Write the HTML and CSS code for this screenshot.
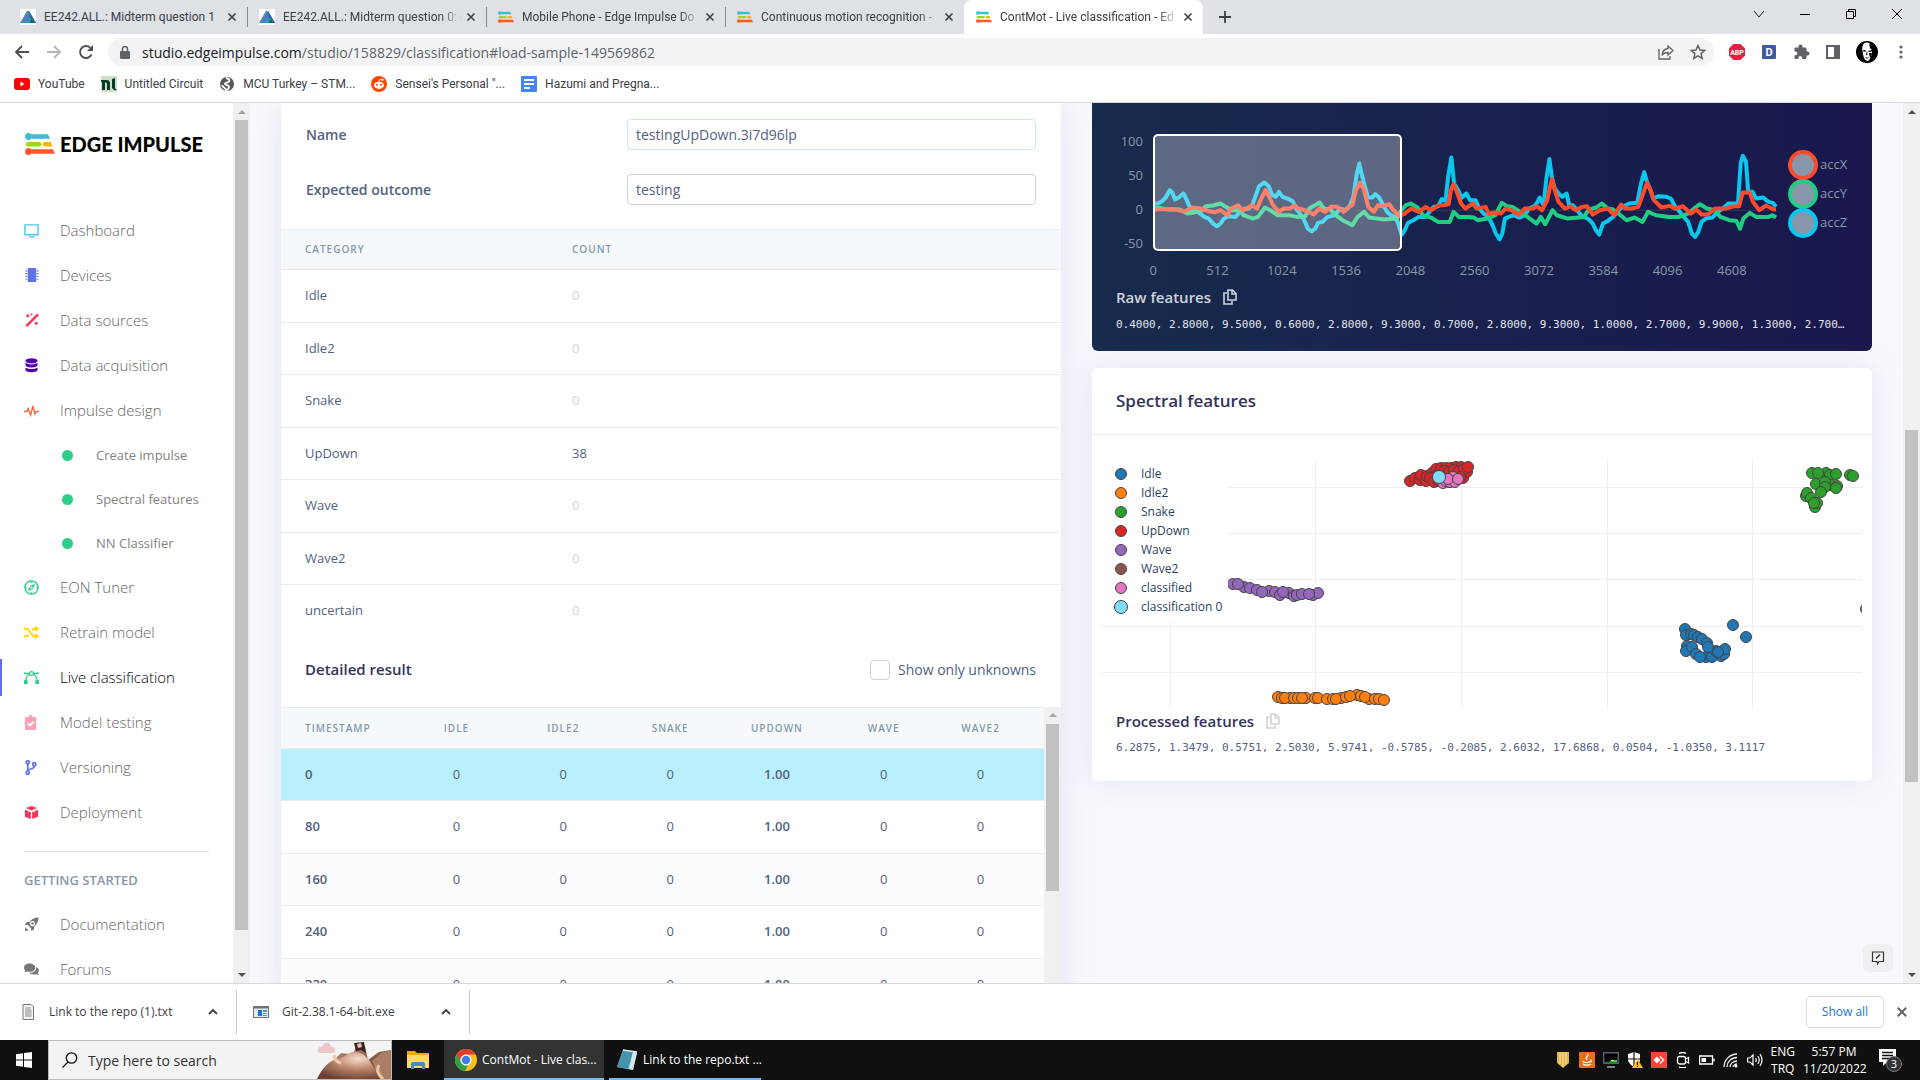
FILE: index.html
```html
<!DOCTYPE html>
<html lang="en">
<head>
<meta charset="utf-8">
<title>ContMot - Live classification - Edge Impulse</title>
<link rel="stylesheet" href="styles.css">
</head>
<body>
<svg class="defs" aria-hidden="true">
  <defs>
    <symbol id="ei" viewBox="0 0 30 22"><path fill="#3bbfd0" d="M3.500 0c1.200 0 1.800.600 2.500 1.300h17l2 4.400H6c-.700.800-1.300 1.300-2.500 1.300a3.500 3.500 0 0 1 0-7z"/><rect x="1" y="9" width="15.500" height="4.400" rx="2.200" fill="#a6d40d"/><path fill="#ffb400" d="M20 9h5.500l2 4.400H20a2.200 2.200 0 0 1 0-4.400z"/><path fill="#ff562e" d="M3.500 15c1.200 0 1.800.600 2.500 1.300h22l2 4.400H6c-.700.800-1.300 1.300-2.500 1.300a3.500 3.500 0 0 1 0-7z"/></symbol>
    <symbol id="moodle" viewBox="0 0 16 16"><path fill="#fff" d="M0 0h16v16H0z"/><path fill="#4a86bd" d="M7 2h2l7 12H0z"/><path fill="#2f6595" d="M9 2l7 12h-6z"/><path fill="#1a9ad0" d="M10 8l4 6H7z"/><path fill="#0b6e3b" d="M11 10l3 4h-4z"/></symbol>
    <symbol id="x" viewBox="0 0 10 10"><path d="M1.500 1.500l7 7M8.500 1.500l-7 7" stroke="currentColor" stroke-width="1.600" fill="none"/></symbol>
    <symbol id="up" viewBox="0 0 10 10"><path d="M1 7l4-4 4 4" stroke="currentColor" stroke-width="1.800" fill="none"/></symbol>
    <symbol id="copy" viewBox="0 0 14 16"><g fill="none" stroke="currentColor" stroke-width="1.600"><path d="M5 1h4.500L13 4.500V11H5z"/><path d="M9 1v4h4M4 4H1v11h8v-3"/></g></symbol>
  </defs>
</svg>

<header class="browser">
  <div class="tabstrip">
    <div class="tab"><svg class="fav"><use href="#moodle"/></svg><span class="tab-title">EE242.ALL.: Midterm question 1</span><button class="tab-close" aria-label="Close tab"><svg><use href="#x"/></svg></button></div>
    <div class="tab ruled"><svg class="fav"><use href="#moodle"/></svg><span class="tab-title">EE242.ALL.: Midterm question 0: (</span><button class="tab-close" aria-label="Close tab"><svg><use href="#x"/></svg></button></div>
    <div class="tab ruled"><svg class="fav"><use href="#ei"/></svg><span class="tab-title">Mobile Phone - Edge Impulse Do</span><button class="tab-close" aria-label="Close tab"><svg><use href="#x"/></svg></button></div>
    <div class="tab ruled"><svg class="fav"><use href="#ei"/></svg><span class="tab-title">Continuous motion recognition -</span><button class="tab-close" aria-label="Close tab"><svg><use href="#x"/></svg></button></div>
    <div class="tab active"><svg class="fav"><use href="#ei"/></svg><span class="tab-title">ContMot - Live classification - Ed</span><button class="tab-close" aria-label="Close tab"><svg><use href="#x"/></svg></button></div>
    <button class="new-tab" aria-label="New tab"><svg viewBox="0 0 12 12"><path d="M6 0v12M0 6h12" stroke="#3c4043" stroke-width="1.800"/></svg></button>
    <div class="window-buttons">
      <button aria-label="Search tabs"><svg viewBox="0 0 10 10"><path d="M0 2l5 6 5-6" fill="none" stroke="#222"/></svg></button>
      <button aria-label="Minimize"><svg viewBox="0 0 10 10"><path d="M0 5.500h10" stroke="#000"/></svg></button>
      <button aria-label="Restore"><svg viewBox="0 0 10 10"><path d="M.5 2.500h7v7h-7zM2.500 2.500v-2h7v7h-2" fill="none" stroke="#000"/></svg></button>
      <button aria-label="Close"><svg viewBox="0 0 10 10"><path d="M0 0l10 10M10 0L0 10" stroke="#000"/></svg></button>
    </div>
  </div>
  <div class="toolbar">
    <div class="nav-buttons">
      <button aria-label="Back"><svg viewBox="0 0 16 16"><path d="M15 8H2M8 2L2 8l6 6" fill="none" stroke="#4b4e52" stroke-width="1.800"/></svg></button>
      <button aria-label="Forward"><svg viewBox="0 0 16 16"><path d="M1 8h13M8 2l6 6-6 6" fill="none" stroke="#b4b6b9" stroke-width="1.800"/></svg></button>
      <button aria-label="Reload"><svg viewBox="0 0 16 16"><path d="M13.500 10.500a6 6 0 1 1-1.200-6.700" fill="none" stroke="#4b4e52" stroke-width="1.900"/><path d="M15 1v6H9z" fill="#4b4e52"/></svg></button>
    </div>
    <div class="address">
      <svg class="lock" viewBox="0 0 10 13"><rect y="5" width="10" height="8" rx="1" fill="#5f6368"/><path d="M2.500 5V3a2.500 2.500 0 0 1 5 0v2" fill="none" stroke="#5f6368" stroke-width="1.500"/></svg>
      <span class="url"><b>studio.edgeimpulse.com</b>/studio/158829/classification#load-sample-149569862</span>
      <svg class="share" viewBox="0 0 16 16"><path d="M1 5v10h11v-3" fill="none" stroke="#5f6368" stroke-width="1.300"/><path d="M10 2l5 4.500-5 4.500V8.500C7 8.500 5 9.500 4 11.500 4.200 8 6 5 10 4.500z" fill="none" stroke="#5f6368" stroke-width="1.300"/></svg>
      <svg class="star" viewBox="0 0 16 16"><path d="M8 1.500l2 4.500 4.800.4-3.700 3.200 1.100 4.800L8 11.900l-4.200 2.500 1.100-4.800L1.200 6.400 6 6z" fill="none" stroke="#5f6368" stroke-width="1.500"/></svg>
    </div>
    <div class="extensions">
      <svg viewBox="0 0 18 18"><path d="M5.500 1h7L17 5.500v7L12.500 17h-7L1 12.500v-7z" fill="#ee1c3f"/><text x="9" y="12" class="abp">ABP</text></svg>
      <svg viewBox="0 0 18 18"><rect x="2" y="2" width="14" height="14" rx="1" fill="#3d5a9e"/><text x="9" y="13" class="dletter">D</text></svg>
      <svg viewBox="0 0 18 18"><path d="M15.500 8.500h-1V5.800c0-.700-.600-1.300-1.300-1.300h-2.700v-1a2 2 0 0 0-4 0v1H3.800c-.700 0-1.300.600-1.300 1.300v2.600h1a1.900 1.900 0 0 1 0 3.800h-1v2.500c0 .700.600 1.300 1.300 1.300h2.500v-1a1.900 1.900 0 0 1 3.800 0v1h3.100c.700 0 1.300-.600 1.300-1.300v-2.200h1a2 2 0 0 0 0-4z" fill="#5f6368"/></svg>
      <svg viewBox="0 0 18 18"><path d="M2 2h14v14H2zM4 4v10h6V4z" fill="#5f6368" fill-rule="evenodd"/></svg>
      <svg class="avatar" viewBox="0 0 22 22"><circle cx="11" cy="11" r="11" fill="#000"/><path d="M7 4c1-3 5-3 7-1 2 2 2 5 2 8 0 3-2 8-4 9-3 0-5-4-5-8-1-3-1-6 0-8z" fill="#fff"/><path d="M7 9l3 .5-.5 1.200-2-.2zM12 10l4-1v1.500l-3 .5zM11 9.500l.5 4.500-1.500.2zM9 16.500h4l-2 1.200zM13 12h3l-1.500 6-1-3zM13 3c3 1 4 3 3 6l-2-2z" fill="#000"/></svg>
      <svg viewBox="0 0 18 18"><g fill="#5f6368"><circle cx="9" cy="4" r="1.600"/><circle cx="9" cy="9" r="1.600"/><circle cx="9" cy="14" r="1.600"/></g></svg>
    </div>
  </div>
  <nav class="bookmarks" aria-label="Bookmarks">
    <a href="#"><svg viewBox="0 0 16 16"><rect y="2" width="16" height="12" rx="3" fill="#f00"/><path d="M6.500 5.500l4 2.500-4 2.500z" fill="#fff"/></svg>YouTube</a>
    <a href="#"><svg viewBox="0 0 16 16"><path fill="#cfdecb" d="M0 0h16v16H0z"/><path fill="#0a3b25" d="M0 4h5c3 0 4 1 4 4v6H6V8c0-1-.5-1.500-2-1.500V14H1V6H0zM11 3l3-1v9c0 2 1 2 2 3-3 1-5-1-5-3z"/></svg>Untitled Circuit</a>
    <a href="#"><svg viewBox="0 0 16 16"><circle cx="8" cy="8" r="7" fill="#55595e"/><path d="M7 2c3 .5 4 2 3 3.500S5.500 6.500 6 8s4 1 4 3-2 3-3 3c0-2-3-2-4-5" fill="none" stroke="#fff" stroke-width="1.800"/></svg>MCU Turkey – STM...</a>
    <a href="#"><svg viewBox="0 0 16 16"><circle cx="8" cy="8" r="8" fill="#ff4500"/><ellipse cx="8" cy="9.300" rx="5" ry="3.600" fill="#fff"/><circle cx="11.500" cy="3.800" r="1.100" fill="#fff"/><path d="M8 6l.8-2.700 2.500.5M5.800 10.800c1.200 1 3.200 1 4.400 0" fill="none" stroke="#fff" stroke-width=".8"/><g fill="#ff4500"><circle cx="6" cy="8.700" r="1"/><circle cx="10" cy="8.700" r="1"/></g></svg>Sensei's Personal "...</a>
    <a href="#"><svg viewBox="0 0 16 16"><rect width="16" height="16" rx="1" fill="#4285f4"/><path d="M3 4h10M3 8h10M3 12h6" stroke="#fff" stroke-width="1.800"/></svg>Hazumi and Pregna...</a>
  </nav>
</header>

<div class="page">
  <aside class="sidebar">
    <a class="logo" href="#"><svg><use href="#ei"/></svg>EDGE IMPULSE</a>
    <nav aria-label="Project">
      <a href="#"><svg viewBox="0 0 16 16"><path d="M1 2h14v10.500H1zM5 14.800h6.500" fill="none" stroke="#4cc5f2" stroke-width="1.500"/></svg>Dashboard</a>
      <a href="#"><svg viewBox="0 0 16 16"><rect x="4" width="9" height="15" rx="1" fill="#5e72e4"/><path d="M1.500 3h14M1.500 6h14M1.500 9h14M1.500 12h14" stroke="#5e72e4" stroke-width="1.200" stroke-dasharray="2 10 2"/></svg>Devices</a>
      <a href="#"><svg viewBox="0 0 16 16"><path d="M2.500 14L15 1.500" stroke="#f5365c" stroke-width="2.800"/><path d="M4 1v4M2 3h4M8 .5v2M7 1.500h2M13 9v4M11 11h4" stroke="#f5365c" stroke-width="1.300"/></svg>Data sources</a>
      <a href="#"><svg viewBox="0 0 16 16"><g fill="#5603ad"><ellipse cx="8" cy="3" rx="6.500" ry="2.800"/><path d="M1.500 5.300q6.500 3 13 0v2q0 2.800-6.500 2.800T1.500 7.300zM1.500 10.300q6.500 3 13 0v2q0 2.800-6.500 2.800T1.500 12.300z"/></g></svg>Data acquisition</a>
      <a href="#"><svg viewBox="0 0 16 16"><path d="M0 9h3l1.500-3L7 13l2.500-10 2 8.500L13 9h3" fill="none" stroke="#fb6340" stroke-width="1.500"/></svg>Impulse design</a>
      <a class="sub" href="#"><i></i>Create impulse</a>
      <a class="sub" href="#"><i></i>Spectral features</a>
      <a class="sub" href="#"><i></i>NN Classifier</a>
      <a href="#"><svg viewBox="0 0 16 16"><circle cx="8" cy="8" r="7" fill="none" stroke="#2dce89" stroke-width="1.500"/><path d="M12 4L9.500 9.500 4 12l2.500-5.500z" fill="#2dce89"/><circle cx="8" cy="8" r="1.200" fill="#fff"/><path d="M8 1v2M8 13v2M1 8h2M13 8h2" stroke="#2dce89"/></svg>EON Tuner</a>
      <a href="#"><svg viewBox="0 0 16 16"><path d="M0 4h3.500l6.500 8h3M0 12h3.500L5 10.200M8.500 5.800L10 4h3" fill="none" stroke="#ffd600" stroke-width="2"/><path d="M12 .5L16 4l-4 3.500zM12 8.500l4 3.500-4 3.500z" fill="#ffd600"/></svg>Retrain model</a>
      <a class="current" href="#"><svg viewBox="0 0 16 16"><g fill="none" stroke="#2dce89" stroke-width="1.300"><path d="M2 12c0-5 2-7.500 6-7.500s6 2.500 6 7.500M2 3.500h12"/><circle cx="8" cy="3.700" r="2" fill="#fff"/></g><path d="M0 11h4v4H0zM12 11h4v4h-4z" fill="#2dce89"/><circle cx="1.200" cy="3.500" r="1.200" fill="#2dce89"/><circle cx="14.800" cy="3.500" r="1.200" fill="#2dce89"/></svg>Live classification</a>
      <a href="#"><svg viewBox="0 0 16 16"><path d="M2 2h3a2 2 0 0 1 4 0h3q1 0 1 1v12q0 1-1 1H2q-1 0-1-1V3q0-1 1-1z" fill="#f7a2b4"/><path d="M4 9l2.300 2.300L10.500 7" fill="none" stroke="#fff" stroke-width="1.800"/></svg>Model testing</a>
      <a href="#"><svg viewBox="0 0 16 16"><g fill="none" stroke="#5e72e4" stroke-width="1.800"><circle cx="4" cy="2.500" r="1.700"/><circle cx="4" cy="13.500" r="1.700"/><circle cx="11" cy="4.500" r="1.700"/><path d="M4 4v8M11 6c0 4-4 3-7 5"/></g></svg>Versioning</a>
      <a href="#"><svg viewBox="0 0 16 16"><path d="M8 1l6 2.300L8 5.800 2 3.300zM1 5l6.300 2.500V15L1 12.500zM15 5L8.700 7.500V15l6.300-2.500z" fill="#f5365c"/><path d="M5 5v3M11 5v3" stroke="#fff" stroke-width=".8"/></svg>Deployment</a>
    </nav>
    <hr>
    <h6>GETTING STARTED</h6>
    <nav aria-label="Getting started">
      <a href="#"><svg viewBox="0 0 16 16"><path d="M15.500.5C11 .5 8 2.500 6 5L2.500 5.500 1 8.500h3l3.500 3.500v3l3-1.500.5-3.500c2.500-2 4.500-5 4.500-9.500z" fill="#777"/><circle cx="9" cy="7" r="2.800" fill="#fff"/><circle cx="9" cy="7" r="1.300" fill="#777"/><path d="M1 15l.5-4 3.500 3.500z" fill="#777"/></svg>Documentation</a>
      <a href="#"><svg viewBox="0 0 16 16"><path d="M6 1.500c3.500 0 6 2 6 4.500s-2.500 4.500-6 4.500c-1 0-1.700-.1-2.500-.4L.5 11l1-2.300C.5 8 0 7 0 6c0-2.500 2.500-4.500 6-4.500z" fill="#777"/><path d="M13 5.500c2 .7 3 2 3 3.500 0 1-.5 2-1.300 2.700l1 2.300-3-1c-3 .7-6 0-7-1.500 4 .2 7.500-2 7.300-6z" fill="#777"/></svg>Forums</a>
    </nav>
  </aside>
  <div class="scrollbar side-scroll"><span class="arrow up off"></span><span class="thumb"></span><span class="arrow down"></span></div>

  <main class="content">
    <section class="card results">
      <form class="fields">
        <label for="name">Name</label><input id="name" class="focused" type="text" value="testingUpDown.3i7d96lp">
        <label for="outcome">Expected outcome</label><input id="outcome" type="text" value="testing">
      </form>
      <table class="summary">
        <thead><tr><th>CATEGORY</th><th>COUNT</th></tr></thead>
        <tbody>
          <tr><td>Idle</td><td class="zero">0</td></tr>
          <tr><td>Idle2</td><td class="zero">0</td></tr>
          <tr><td>Snake</td><td class="zero">0</td></tr>
          <tr><td>UpDown</td><td>38</td></tr>
          <tr><td>Wave</td><td class="zero">0</td></tr>
          <tr><td>Wave2</td><td class="zero">0</td></tr>
          <tr><td>uncertain</td><td class="zero">0</td></tr>
        </tbody>
      </table>
      <div class="detail-head">
        <h4>Detailed result</h4>
        <label class="check"><input type="checkbox">Show only unknowns</label>
      </div>
      <div class="detail-body">
        <table class="detail">
          <thead><tr><th>TIMESTAMP</th><th>IDLE</th><th>IDLE2</th><th>SNAKE</th><th>UPDOWN</th><th>WAVE</th><th>WAVE2</th></tr></thead>
          <tbody>
            <tr class="selected"><td>0</td><td>0</td><td>0</td><td>0</td><td>1.00</td><td>0</td><td>0</td></tr>
            <tr><td>80</td><td>0</td><td>0</td><td>0</td><td>1.00</td><td>0</td><td>0</td></tr>
            <tr><td>160</td><td>0</td><td>0</td><td>0</td><td>1.00</td><td>0</td><td>0</td></tr>
            <tr><td>240</td><td>0</td><td>0</td><td>0</td><td>1.00</td><td>0</td><td>0</td></tr>
            <tr><td>320</td><td>0</td><td>0</td><td>0</td><td>1.00</td><td>0</td><td>0</td></tr>
          </tbody>
        </table>
        <div class="scrollbar table-scroll"><span class="arrow up off"></span><span class="thumb"></span></div>
      </div>
    </section>

    <div class="column">
      <section class="raw">
        <div class="chart">
          <ul class="y-axis"><li>100</li><li>50</li><li>0</li><li>-50</li></ul>
          <div class="plot">
            <svg viewBox="136 102 1163 350" preserveAspectRatio="none">
              <path class="zero-line" d="M136 330H1299"/>
              <polyline class="acc-z" points="136,310 145,310 153,303 160,292 167,270 172,277 177,298 184,292 193,280 199,300 206,325 214,330 222,338 232,350 240,355 248,370 255,378 262,370 268,356 276,348 290,350 298,335 307,325 315,325 322,312 328,285 334,258 344,247 352,258 358,283 365,290 371,275 378,290 388,296 397,303 403,325 410,340 417,355 425,385 432,393 439,385 444,368 452,365 462,350 475,345 485,325 495,330 503,318 510,290 516,225 521,190 526,225 532,262 537,292 545,292 551,282 558,292 566,315 573,335 580,345 588,350 594,370 600,404 606,390 612,368 622,360 632,350 645,350 652,335 660,320 668,318 675,297 682,302 687,230 693,172 698,250 705,268 712,293 721,280 728,300 738,300 745,325 753,340 762,350 770,375 776,400 783,417 788,400 793,355 800,350 810,345 820,352 830,345 838,325 848,318 853,308 858,292 865,315 870,240 876,177 881,235 886,265 893,280 900,290 908,280 913,315 920,315 928,330 935,345 943,352 950,358 957,370 963,390 969,403 976,370 985,362 995,350 1005,330 1014,318 1025,310 1040,308 1047,250 1053,216 1058,245 1065,272 1070,295 1080,288 1095,290 1103,295 1110,318 1118,332 1128,352 1135,365 1142,400 1148,410 1154,395 1160,365 1168,355 1180,352 1190,335 1200,325 1210,310 1228,310 1233,190 1237,167 1243,185 1247,275 1255,275 1262,295 1275,292 1285,305 1293,308 1299,320"/>
              <polyline class="acc-y" points="136,322 150,324 165,328 185,328 200,340 215,336 228,330 235,318 248,316 262,310 272,320 284,330 298,330 305,345 322,355 332,350 345,322 355,330 368,345 390,345 405,350 420,348 428,325 447,307 455,325 467,328 477,345 490,360 508,375 518,350 530,335 540,352 568,358 590,355 600,330 608,315 617,310 630,322 640,345 655,352 668,365 690,365 697,335 707,350 725,350 735,352 742,360 760,355 775,345 787,308 797,318 807,320 822,335 835,350 852,370 860,350 868,372 882,330 890,345 910,355 940,350 950,328 963,322 974,310 985,325 995,328 1005,340 1020,360 1035,352 1050,365 1060,335 1075,345 1100,350 1118,350 1135,340 1150,320 1157,312 1170,325 1185,330 1195,350 1212,360 1225,362 1232,385 1238,355 1250,338 1262,350 1285,350 1292,345 1299,352"/>
              <polyline class="acc-x" points="136,328 160,326 175,327 195,333 210,322 225,325 240,333 252,336 262,330 275,345 282,325 295,315 302,330 312,325 320,315 330,325 337,300 346,270 353,290 360,315 371,335 380,325 392,325 400,315 407,325 420,330 436,343 446,325 458,335 468,320 480,320 492,335 500,322 508,315 515,270 522,248 529,265 538,320 548,335 556,315 565,318 577,312 585,330 596,347 606,340 618,325 632,335 645,320 655,330 668,316 678,315 688,312 692,270 697,252 703,275 711,310 719,325 733,310 740,325 757,320 762,340 773,337 785,340 795,325 805,330 819,344 830,325 845,325 853,318 862,330 872,300 877,260 881,237 886,270 893,305 905,325 915,318 925,330 937,320 946,318 957,343 970,330 985,325 997,345 1010,313 1018,325 1030,325 1042,320 1050,285 1058,248 1065,270 1071,300 1085,322 1101,317 1110,325 1125,318 1140,340 1150,328 1160,343 1172,343 1185,325 1205,325 1220,318 1230,318 1237,277 1250,277 1256,305 1268,330 1280,316 1295,328 1299,328"/>
            </svg>
            <div class="selection"></div>
          </div>
          <ul class="series"><li class="sx">accX</li><li class="sy">accY</li><li class="sz">accZ</li></ul>
          <ul class="x-axis"><li>0</li><li>512</li><li>1024</li><li>1536</li><li>2048</li><li>2560</li><li>3072</li><li>3584</li><li>4096</li><li>4608</li></ul>
        </div>
        <h5>Raw features <button aria-label="Copy raw features"><svg><use href="#copy"/></svg></button></h5>
        <code>0.4000, 2.8000, 9.5000, 0.6000, 2.8000, 9.3000, 0.7000, 2.8000, 9.3000, 1.0000, 2.7000, 9.9000, 1.3000, 2.700…</code>
      </section>

      <section class="card features">
        <h4>Spectral features</h4>
        <div class="scatter">
          <svg id="scatter" viewBox="0 0 761 250">
            <path class="grid" d="M69.500 0v250M214.500 0v250M360.500 0v250M506.500 0v250M651.500 0v250M0 28.500h761M0 74.500h761M0 120.500h761M0 167.500h761M0 213.500h761"/>
          </svg>
          <ul class="legend">
            <li><i style="background:#1f77b4"></i>Idle</li>
            <li><i style="background:#ff7f0e"></i>Idle2</li>
            <li><i style="background:#2ca02c"></i>Snake</li>
            <li><i style="background:#d62728"></i>UpDown</li>
            <li><i style="background:#9467bd"></i>Wave</li>
            <li><i style="background:#8c564b"></i>Wave2</li>
            <li><i style="background:#e377c2"></i>classified</li>
            <li><i class="big" style="background:#7fdbff"></i>classification 0</li>
          </ul>
        </div>
        <div class="processed">
          <h5>Processed features <button aria-label="Copy processed features"><svg><use href="#copy"/></svg></button></h5>
          <code>6.2875, 1.3479, 0.5751, 2.5030, 5.9741, -0.5785, -0.2085, 2.6032, 17.6868, 0.0504, -1.0350, 3.1117</code>
        </div>
      </section>
    </div>
    <button class="feedback" aria-label="Feedback"><svg viewBox="0 0 14 14"><path d="M1.500 1h11v9.500H8L6.500 13 6 10.500H1.500z" fill="none" stroke="#333" stroke-width="1.200"/><path d="M5 7.500l4-4" stroke="#333" stroke-width="1.500"/></svg></button>
  </main>
  <div class="scrollbar page-scroll"><span class="arrow up"></span><span class="thumb"></span><span class="arrow down"></span></div>
</div>

<section class="downloads" aria-label="Downloads">
  <div class="download"><svg class="file" viewBox="0 0 16 16"><path d="M3 .5h8l2.500 2.500v12.500H3z" fill="#f4f4f4" stroke="#777"/><path d="M5 4h6M5 6h6.500M5 8h6.500M5 10h6.500M5 12h6.500" stroke="#888"/></svg><span>Link to the repo (1).txt</span><button aria-label="More"><svg><use href="#up"/></svg></button></div>
  <div class="download second"><svg class="file" viewBox="0 0 16 16"><path d="M.5 2.500h15v11H.5z" fill="#e8eaed" stroke="#6d7278"/><path d="M.5 2.500h15v2H.5z" fill="#6d7278"/><path d="M5 6h4v6H5z" fill="#1078d8"/><path d="M10 6h4v2h-4zM10 9h4v1h-4zM10 11h4v1h-4z" fill="#4d93d0"/></svg><span>Git-2.38.1-64-bit.exe</span><button aria-label="More"><svg><use href="#up"/></svg></button></div>
  <div class="download-actions"><button class="show-all">Show all</button><button class="dismiss" aria-label="Close downloads"><svg><use href="#x"/></svg></button></div>
</section>

<footer class="taskbar">
  <button class="start" aria-label="Start"><svg viewBox="0 0 16 16"><path d="M0 2.200l7-1v6.300H0zM8 1l8-1v7.500H8zM0 8.500h7v6.300l-7-1zM8 8.500h8V16l-8-1z" fill="#fff"/></svg></button>
  <label class="search">
    <svg class="lens" viewBox="0 0 16 16"><circle cx="9.500" cy="6" r="5.200" fill="none" stroke="#111" stroke-width="1.300"/><path d="M6 10L.5 15.500" stroke="#111" stroke-width="1.300"/></svg>
    <input type="text" placeholder="Type here to search" aria-label="Search">
    <svg class="art" viewBox="0 0 74 38">
      <defs>
        <linearGradient id="m1" x1="0" x2="1" y1="0" y2="1"><stop offset="0" stop-color="#c79a7c"/><stop offset=".5" stop-color="#8a5c48"/><stop offset="1" stop-color="#4b2a25"/></linearGradient>
        <radialGradient id="m2" cx=".65" cy=".25" r=".8"><stop offset="0" stop-color="#f6dccb"/><stop offset=".5" stop-color="#b98468"/><stop offset="1" stop-color="#6a4036"/></radialGradient>
      </defs>
      <path d="M3 12c-4-2-2-7 2-6 2-6 9-5 9 0 5-1 6 6 1 6z" fill="#eec6ca"/>
      <path d="M17 19l7-7 8 1 5-2 2-6h9l3 14 4-3 7-5 12-2v29H10z" fill="url(#m1)"/>
      <path d="M37 2l10-1 2 11-5-3-5 1z" fill="#3a2222"/><path d="M40 3l4-1 1 4-4 1z" fill="#e6c2a8"/>
      <path d="M55 20l9-8 10-3v29H62z" fill="#ad7d63"/>
      <path d="M0 38c6-12 12-18 20-20 8-1 12-8 18-7 9 0 14 7 18 14l8 13z" fill="url(#m2)"/>
      <path d="M17 14q1 7 7 8M62 24q-4 7 4 14" fill="none" stroke="#edc9a4" stroke-width="3"/>
    </svg>
  </label>
  <button class="explorer" aria-label="File Explorer"><svg viewBox="0 0 22 20"><path d="M0 1h8l2 2h12v15H0z" fill="#f3a712"/><path d="M0 5h22v13H0z" fill="#ffd968"/><path d="M4 19v-5q0-2 2-2h10q2 0 2 2v5h-3v-3H7v3z" fill="#3f8fd0"/></svg></button>
  <button class="task focus"><svg viewBox="0 0 22 22"><circle cx="11" cy="11" r="11" fill="#fbc116"/><path d="M1.500 5.500A11 11 0 0 1 20.500 5.500H11a5.500 5.500 0 0 0-5 8z" fill="#e33b2e"/><path d="M1.500 5.500L6.200 13.700A5.500 5.500 0 0 0 13 16l-3 6A11 11 0 0 1 1.500 5.500z" fill="#2ba24c"/><circle cx="11" cy="11" r="5.500" fill="#fff"/><circle cx="11" cy="11" r="4.200" fill="#3b7ded"/></svg>ContMot - Live clas...</button>
  <button class="task"><svg viewBox="0 0 22 22"><path d="M7 1l14 2-4 18L1 18z" fill="#7fc4d8"/><path d="M7 1l10 1.500L12 20 1 18z" fill="#4795ad"/><path d="M17 3l4 1-4 17-4-1z" fill="#d7e6ea"/><path d="M7 1l14 2" stroke="#e6e6e6" stroke-width="1.500"/></svg>Link to the repo.txt ...</button>
  <div class="tray">
    <svg viewBox="0 0 16 16"><path d="M2 0h12v11l-6 5-6-5z" fill="#e0b44e"/><path d="M5 0v12M8 0v15M11 0v12" stroke="#fbe6a0"/></svg>
    <svg viewBox="0 0 16 16"><rect width="16" height="16" rx="1" fill="#e76f17"/><path d="M8 2c3 2-3 3 0 6M4 9c0 2 7 2 7 0M4 12c2 2 7 1 8 0M11 8c2 0 2 2 0 2" fill="none" stroke="#fff" stroke-width="1.200"/></svg>
    <svg viewBox="0 0 16 16"><path d="M0 0h16v12H0z" fill="#55606b"/><path d="M1.500 1.500h13v9h-13z" fill="#000"/><path d="M2 10h5v-1h3V8h4v2.500H2z" fill="#2fd32f"/><path d="M8 8h3v1H8z" fill="#e8e32b"/><path d="M4 14h8v2H4z" fill="#78828c"/></svg>
    <svg viewBox="0 0 16 16"><path d="M7 0l6 2v5c0 4-3 6-6 8-3-2-6-4-6-8V2z" fill="#fff"/><path d="M7 0v15M1 7h12" stroke="#101010" stroke-width="1.200"/><path d="M10.500 7L16 16H5z" fill="#ffc20e"/><path d="M10.500 10v3M10.500 14v1" stroke="#111" stroke-width="1.200"/></svg>
    <svg viewBox="0 0 16 16"><path d="M0 0h16v16H0z" fill="#fb4238"/><path d="M6 4.500L9.500 8 6 11.500 2.500 8z" fill="#fff"/><path d="M9 4.500L12.500 8 9 11.500" fill="none" stroke="#fff" stroke-width="1.500"/></svg>
    <svg viewBox="0 0 16 16"><g fill="none" stroke="#fff" stroke-width="1.300"><rect x="2.500" y="4.500" width="8" height="7.500" rx="2"/><path d="M10.500 7l3-1.500v5.500l-3-1.500M4 1.500q3.500-2 7 0M4 15q3.500 1.500 7 0"/></g></svg>
    <svg viewBox="0 0 16 16"><path d="M.5 4h13v8H.5zM15 6.500v3" fill="none" stroke="#fff" stroke-width="1.300"/><path d="M2.500 6H7v4H2.500z" fill="#fff"/></svg>
    <svg viewBox="0 0 16 16"><g fill="none" stroke="#eee" stroke-width="1.300"><path d="M1 15C1 8 7 2 14 2M4 15c0-5 4-9.500 10-9.500M7 15c0-3 3-6 7-6"/><path d="M10 15c0-1.500 2-3 4-3"/></g><circle cx="13" cy="14" r="1.500" fill="#fff"/></svg>
    <svg viewBox="0 0 16 16"><path d="M.5 6h2.500l3-3v10l-3-3H.5zM8.500 6q1.500 2 0 4M10.800 4q2.800 4 0 8M13 2q4 6 0 12" fill="none" stroke="#fff" stroke-width="1.200"/></svg>
    <div class="lang">ENG<br>TRQ</div>
    <div class="clock">5:57 PM<br>11/20/2022</div>
    <button class="notes" aria-label="3 notifications"><svg viewBox="0 0 26 26"><path d="M1 2h17v13H9l-4 4v-4H1z" fill="#fff"/><path d="M4 5.500h11M4 8.500h11M4 11.500h8" stroke="#101010" stroke-width="1.300"/><circle cx="16" cy="17" r="7.500" fill="#333" stroke="#777"/><text x="16" y="21">3</text></svg></button>
  </div>
</footer>
<script src="script.js"></script>
</body>
</html>
```
FILE: styles.css
```css
* { box-sizing: border-box; }

body {
  margin: 0;
  height: 100vh;
  display: flex;
  flex-direction: column;
  overflow: hidden;
  font-family: "Open Sans", "Noto Sans", sans-serif;
  font-size: 13px;
  line-height: 1.5;
  color: #525f7f;
  background: #fff;
}

button { border: 0; padding: 0; background: none; font: inherit; color: inherit; }
a { color: inherit; text-decoration: none; }
ul { list-style: none; margin: 0; padding: 0; }
h4, h5, h6 { margin: 0; font-weight: 600; color: #32325d; }
svg { display: block; flex: none; }
.defs { position: absolute; width: 0; height: 0; }

/* Browser chrome */
.browser { flex: none; border-bottom: 1px solid #d8dadd; font-family: Roboto, "Open Sans", sans-serif; font-size: 12px; color: #3c4043; }
.tabstrip { display: flex; height: 34px; padding-left: 8px; background: #dee1e6; }
.tab { flex: none; display: flex; align-items: center; width: 239px; padding: 0 10px 0 12px; }
.tab.ruled { background: linear-gradient(#85888c, #85888c) 0 7px / 1px 20px no-repeat; }
.tab.active { background: #fff; border-radius: 8px 8px 0 0; }
.fav { width: 16px; height: 16px; }
.tab-title {
  flex: 1;
  min-width: 0;
  margin: 0 4px 0 8px;
  white-space: nowrap;
}
.tab:not(:first-child) .tab-title { mask-image: linear-gradient(90deg, #000 88%, transparent); }
.tab-close svg { width: 10px; height: 10px; }
.new-tab { width: 44px; display: grid; place-items: center; }
.new-tab svg { width: 12px; height: 12px; }
.window-buttons { margin-left: auto; display: flex; }
.window-buttons button { width: 46px; height: 28px; display: grid; place-items: center; }
.window-buttons svg { width: 10px; height: 10px; }

.toolbar { display: flex; align-items: center; gap: 14px; padding: 4px 10px 4px 14px; }
.nav-buttons { display: flex; gap: 16px; }
.nav-buttons svg { width: 16px; height: 16px; }
.address {
  flex: 1;
  display: flex;
  align-items: center;
  height: 28px;
  padding: 0 8px 0 12px;
  border-radius: 14px;
  background: #f1f3f4;
  font-family: "Open Sans", sans-serif;
  font-size: 14px;
  color: #5f6368;
}
.lock { width: 10px; height: 13px; margin-right: 12px; }
.url { flex: 1; }
.url b { font-weight: 400; color: #202124; }
.share, .star { width: 16px; height: 16px; }
.share { margin-right: 16px; }
.extensions { display: flex; align-items: center; gap: 14px; }
.extensions svg { width: 18px; height: 18px; }
.extensions .avatar { width: 22px; height: 22px; }
.abp { font-size: 7px; font-weight: 700; fill: #fff; text-anchor: middle; }
.dletter { font-size: 11px; font-weight: 700; fill: #fff; text-anchor: middle; }

.bookmarks { display: flex; gap: 16px; padding: 7px 14px 11px; height: 32px; align-items: center; }
.bookmarks a { display: flex; align-items: center; gap: 8px; }
.bookmarks svg { width: 16px; height: 16px; }

/* Page frame */
.page { flex: 1; min-height: 0; display: flex; overflow: hidden; }

.scrollbar { flex: none; width: 17px; display: flex; flex-direction: column; align-items: center; background: #f0f0f0; }
.scrollbar .thumb { width: 13px; background: #c1c1c1; }
.arrow { flex: none; width: 17px; height: 17px; display: grid; place-items: center; }
.arrow::after { content: ""; border: 4px solid transparent; border-top-width: 0; border-bottom-color: #505050; }
.arrow.down { margin-top: auto; }
.arrow.down::after { border-width: 4px 4px 0; border-color: #505050 transparent transparent; }
.arrow.off::after { border-bottom-color: #a3a3a3; }
.side-scroll .thumb { height: 92%; }
.page-scroll .thumb { height: 40%; margin-top: 310px; }
.table-scroll .thumb { height: 167px; }

/* Sidebar */
.sidebar { flex: none; width: 233px; background: #fff; overflow: hidden; }
.logo { display: flex; align-items: center; gap: 5px; padding: 30px 0 53px 25px; font: 900 20px/22px Lato, sans-serif; color: #000; }
.logo svg { width: 30px; height: 22px; }
.sidebar nav a {
  display: flex;
  align-items: center;
  margin: 4px 0;
  padding: 8px 0 8px 22px;
  border-left: 2px solid transparent;
  font-size: 15px;
  line-height: 21px;
  font-weight: 300;
  color: #666;
}
.sidebar nav { display: flex; flex-direction: column; }
.sidebar nav svg { width: 15px; height: 15px; margin-right: 21px; }
.sidebar nav .sub { padding-left: 60px; font-size: 13px; line-height: 20px; font-weight: 400; color: #828282; }
.sub i { width: 11px; height: 11px; margin-right: 23px; border-radius: 50%; background: #2dce89; }
.sidebar nav .current { border-left-color: #5e72e4; color: #000; }
.sidebar hr { margin: 16px 24px 19px; border: 0; border-top: 1px solid #e2e3e5; }
.sidebar h6 { margin: 0 24px 13px; font-size: 13px; line-height: 18px; color: #8898aa; }

/* Content */
.content {
  position: relative;
  flex: 1;
  display: grid;
  grid-template-columns: minmax(0, 1fr) minmax(0, 1fr);
  gap: 31px;
  align-items: start;
  padding: 0 31px;
  background: #f8f9fe;
  overflow: hidden;
}
.card { background: #fff; box-shadow: 0 0 32px rgba(136, 152, 170, .2); }

.fields {
  display: grid;
  grid-template-columns: 1fr 409px;
  row-gap: 24px;
  align-items: center;
  padding: 16px 25px 24px;
}
.fields label { font-size: 14px; font-weight: 600; line-height: 28px; }
.fields input {
  height: 31px;
  padding: 0 8px;
  border: 1px solid #cad1d7;
  border-radius: 4px;
  background: #fff;
  font: 14px "Open Sans", sans-serif;
  color: #525f7f;
}
.fields input.focused { border-color: #cbe6f5; }

table { width: 100%; border-collapse: collapse; table-layout: fixed; }
th { padding: 12px 8px; font-size: 10px; line-height: 15px; font-weight: 600; letter-spacing: 1px; color: #8898aa; background: #f6f9fc; border: 1px solid #e9ecef; border-width: 1px 0; }
td { padding: 16px 8px; border-top: 1px solid #e9ecef; }
.summary th, .summary td { text-align: left; }
.summary th:first-child { width: 283px; }
.zero { color: #ced4da; }

.detail-head { display: flex; justify-content: space-between; align-items: center; padding: 20px 25px 24px 24px; }
.detail-head h4 { font-size: 15px; line-height: 24px; padding-bottom: 2px; }
.check { display: flex; align-items: center; gap: 8px; font-size: 14px; line-height: 26px; }
.check input { appearance: none; width: 20px; height: 20px; margin: 0; border: 1px solid #cad1d7; border-radius: 4px; background: #fff; }

.detail-body { display: flex; }
.detail th { line-height: 16px; }
.detail td, .detail th { text-align: center; }
.detail th:first-child { width: 16%; }
.detail th:last-child, .detail td:last-child { padding-right: 28px; }
.detail td:first-child, .detail td:nth-child(5) { font-weight: 600; }
.detail tr:nth-child(odd) td { background: #fbfcfe; }
.detail .selected td { background: #baf0fb !important; }
.results th:first-child, .results td:first-child { padding-left: 24px; text-align: left; }

.raw {
  padding: 21px 24px 16px;
  border-radius: 0 0 6px 6px;
  background: linear-gradient(87deg, #172b4d, #1a174d);
  color: #8898aa;
  overflow: hidden;
}
.chart { display: grid; grid-template-columns: 37px 1fr 72px; grid-template-rows: 136px 20px; }
.y-axis { padding-right: 10px; text-align: right; line-height: 34px; }
.plot { position: relative; margin-top: 10px; height: 117px; }
.plot svg { width: 100%; height: 100%; overflow: visible; }
.plot polyline { fill: none; stroke-width: 4; stroke-linejoin: round; vector-effect: non-scaling-stroke; }
.zero-line { stroke: #333b50; vector-effect: non-scaling-stroke; }
.acc-x { stroke: #ff4b2b; }
.acc-y { stroke: #1fce83; }
.acc-z { stroke: #08c8ee; }
.selection { position: absolute; inset: 0 60% 0 0; border: 2px solid #fff; border-radius: 5px; background: rgba(255, 255, 255, .3); }
.series { padding: 26px 0 0 12px; }
.series li { display: flex; align-items: center; gap: 2px; height: 29px; }
.series li::before { content: ""; width: 22px; height: 22px; border: 4px solid; border-radius: 50%; background: #8898aa; }
.sx::before { border-color: #ff4b2b !important; }
.sy::before { border-color: #1fce83 !important; }
.sz::before { border-color: #08c8ee !important; }
.x-axis { grid-column: 2; display: grid; grid-template-columns: repeat(10, 1fr); margin: 0 12px 0 -32px; text-align: center; line-height: 20px; }

h5 { display: flex; align-items: center; gap: 12px; font-size: 15px; line-height: 24px; }
h5 svg { width: 14px; height: 16px; }
code { display: block; overflow: hidden; white-space: nowrap; text-overflow: ellipsis; font: 11px/20px "DejaVu Sans Mono", monospace; }
.raw h5 { margin: 5px 0 6px; color: #ced4da; }
.raw code { color: #e3e6ec; }

.features { margin-top: 17px; border-radius: 6px; padding-bottom: 23px; }
.features h4 { padding: 20px 24px; font-size: 17px; line-height: 26px; border-bottom: 1px solid #eceef0; }
.scatter { position: relative; margin: 24px 10px 0 9px; }
.scatter svg { width: 100%; height: auto; }
.grid { stroke: #eee; fill: none; }
.scatter circle { stroke: #444; stroke-width: 1; }
.legend { position: absolute; left: 0; top: 0; width: 127px; padding: 5px 0; background: #fff; font-size: 12px; line-height: 19px; color: #2a3f5f; }
.legend li { display: flex; align-items: center; gap: 14px; padding-left: 14px; }
.legend i { width: 12px; height: 12px; border: 1px solid #444; border-radius: 50%; }
.legend .big { width: 14px; height: 14px; margin: 0 -1px; }
.processed { padding: 0 24px; }
.processed h5 { margin-bottom: 5px; }
.processed h5 svg { color: #ced4da; }

.feedback { position: absolute; right: 10px; bottom: 11px; width: 30px; height: 28px; display: grid; place-items: center; border-radius: 5px; background: #f0f0f1; }
.feedback svg { width: 14px; height: 14px; }

/* Downloads shelf */
.downloads { flex: none; display: flex; align-items: center; height: 57px; border-top: 1px solid #d8dadd; font-size: 12px; color: #3c4043; }
.download { display: flex; align-items: center; width: 237px; height: 44px; padding: 0 18px 0 20px; border-right: 1px solid #c8c9cb; }
.download.second { width: 233px; padding-left: 16px; }
.file { width: 16px; height: 16px; margin-right: 13px; }
.download button { margin-left: auto; }
.download button svg { width: 10px; height: 10px; }
.download-actions { margin-left: auto; display: flex; align-items: center; gap: 12px; padding-right: 12px; }
.show-all { width: 78px; height: 32px; border: 1px solid #dadce0; border-radius: 4px; font-weight: 500; color: #1a73e8; }
.dismiss svg { width: 12px; height: 12px; color: #5f6368; }

/* Taskbar */
.taskbar { flex: none; display: flex; height: 40px; background: #101010; color: #fff; font-size: 12px; }
.start { width: 48px; display: grid; place-items: center; }
.start svg { width: 16px; height: 16px; }
.search { display: flex; align-items: center; width: 344px; padding-left: 13px; background: #f3f3f3; border: 1px solid #bbb; }
.lens { width: 16px; height: 16px; margin-right: 10px; }
.search input { flex: 1; min-width: 0; border: 0; padding: 0; background: none; font: 14px "Open Sans", sans-serif; }
.search input::placeholder { color: #333; }
.art { width: 74px; height: 38px; }
.explorer { width: 52px; display: grid; place-items: center; }
.explorer svg { width: 22px; height: 20px; }
.task { display: flex; align-items: center; gap: 5px; width: 152px; margin-left: 5px; padding-left: 7px; box-shadow: inset 0 -2px #76b9ed; white-space: nowrap; }
.task.focus { width: 160px; margin-left: 0; padding-left: 11px; background: #333; }
.task svg { width: 22px; height: 22px; }
.tray { margin-left: auto; display: flex; align-items: center; gap: 8px; padding-right: 16px; }
.tray svg { width: 16px; height: 16px; }
.lang, .clock { text-align: center; line-height: 17px; }
.clock { width: 62px; }
.notes { margin-left: 5px; }
.tray .notes svg { width: 26px; height: 26px; }
.notes text { font-size: 11px; fill: #fff; text-anchor: middle; }
```
FILE: script.js
```js
// Feature explorer points, in plot coordinates.
const clusters = [
  ["#1f77b4", 5.5, "584,170 585,176 590,175 593,176 597,178 601,180 606,184 586,187 585,192 591,188 595,195 605,198 611,198 615,192 620,197 623,195 624,190 617,193 607,188 599,198 632,166 645,178"],
  ["#ff7f0e", 5.5, "177,238 181,239 189,239 184,239 193,239 197,239 205,239 201,239 214,239 217,239 226,240 232,240 240,239 235,240 245,238 256,236 249,237 260,237 268,240 264,238 274,240 278,240 283,241"],
  ["#2ca02c", 5.5, "725,14 711,14 717,14 729,16 735,15 749,16 752,17 730,26 715,25 724,23 724,28 736,27 735,29 720,33 705,37 706,34 710,39 714,48 716,44 713,44"],
  ["#d62728", 5.5, "309,22 314,19 319,21 320,16 325,22 326,17 331,14 332,20 335,10 336,16 340,9 341,15 345,9 346,17 350,9 351,15 355,8 356,14 360,8 361,15 362,19 366,13 329,19 333,23 338,22 343,12 348,13 353,11 358,12 363,10 348,23 342,22 359,18 367,8"],
  ["#9467bd", 5.5, "132,125 143,128 137,125 149,129 156,131 168,132 161,133 174,133 179,136 188,134 182,133 193,137 196,136 201,135 212,136 217,134 208,135"],
  ["#e377c2", 5.5, "342,24 345,22 349,23 352,18 354,23 347,20 357,20"],
  ["#7f7f7f", 5.5, "765,150"],
  ["#7fdbff", 6.5, "338,18"]
];
const plot = document.getElementById("scatter");
for (const [color, radius, points] of clusters) {
  for (const point of points.split(" ")) {
    const [x, y] = point.split(",");
    const dot = document.createElementNS("http://www.w3.org/2000/svg", "circle");
    dot.setAttribute("cx", x);
    dot.setAttribute("cy", y);
    dot.setAttribute("r", radius);
    dot.setAttribute("fill", color);
    plot.appendChild(dot);
  }
}
```
